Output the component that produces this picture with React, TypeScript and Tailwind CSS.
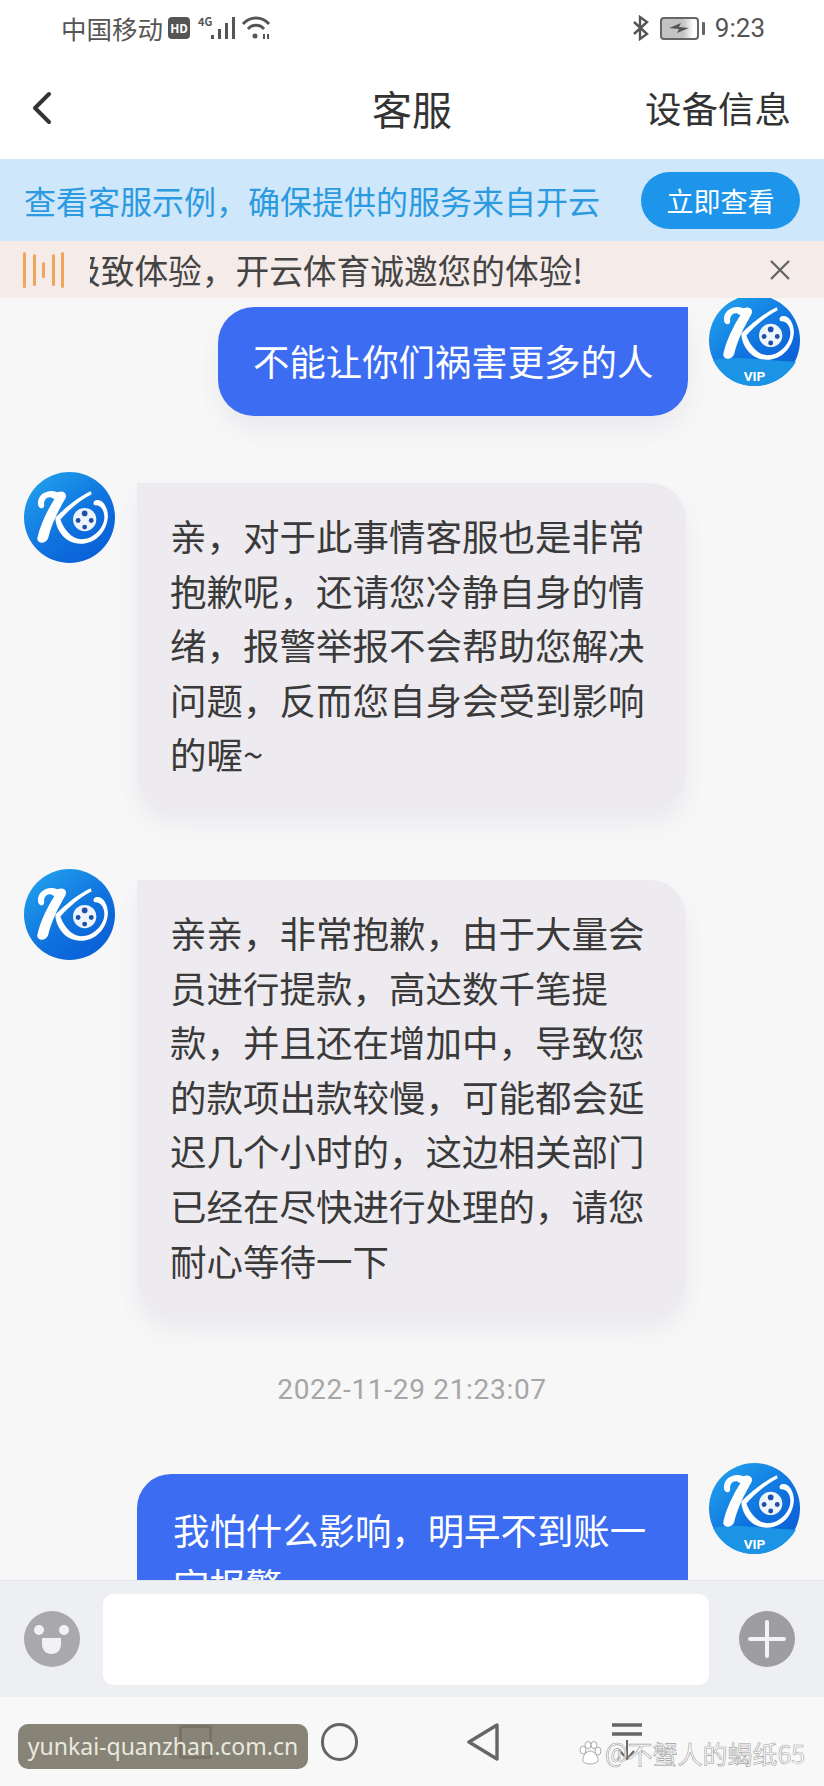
import React from 'react';

const Logo: React.FC<{ vip?: boolean; id: string }> = ({ vip, id }) => (
  <svg viewBox="0 0 90 90" className="h-[91px] w-[91px] shrink-0">
    <defs>
      <linearGradient id={id} x1="0.15" y1="0.1" x2="0.85" y2="0.95">
        <stop offset="0" stopColor="#1f9cec" />
        <stop offset="0.55" stopColor="#0f72de" />
        <stop offset="1" stopColor="#0a5ed6" />
      </linearGradient>
    </defs>
    <circle cx="45" cy="45" r="45" fill={`url(#${id})`} />
    {vip && <path d="M4 64 C22 60 50 64 86 66 C78 80 62 90 45 90 C26 90 11 79 4 64 Z" fill="#1b94e6" />}
    <g transform={vip ? 'translate(1 -7)' : undefined}>
      {/* script K: stem with flourish, arm, leg sweeping round the ball */}
      <path d="M33 20 C39 18 43 21 41 26 C34 38 27 52 24 65 C22 71 14 72 13 66 C16 52 23 38 30 27 C24 22 19 27 20 33 C20 37 15 37 14 33 C12 23 23 16 33 20 Z" fill="#fff" />
      <path d="M66 19 C55 24 42 34 31 45 C31 56 40 71 56 71 C71 71 82 59 83 44 C83 34 77 26 71 28 C68 29 68 33 71 33 C76 33 79.5 38 79.5 45 C79 56 68 66.5 57 66.5 C47 66.5 39 56 36 47 C44 38 55 28 67 22 Z" fill="#fff" />
      <circle cx="60" cy="47" r="11.5" fill="#eef4fb" />
      <circle cx="60" cy="41" r="2.8" fill="#1d4fa8" />
      <circle cx="53.5" cy="48" r="2.4" fill="#1d4fa8" />
      <circle cx="66.5" cy="48" r="2.4" fill="#1d4fa8" />
      <circle cx="60" cy="54.5" r="2.4" fill="#1d4fa8" />
    </g>
    {vip && (
      <text x="45" y="85" textAnchor="middle" fill="#fff" fontSize="13.5" fontWeight="700" fontFamily="Roboto, sans-serif">
        VIP
      </text>
    )}
  </svg>
);

const incoming = [
  ['亲，对于此事情客服也是非常', '抱歉呢，还请您冷静自身的情', '绪，报警举报不会帮助您解决', '问题，反而您自身会受到影响', '的喔~'],
  ['亲亲，非常抱歉，由于大量会', '员进行提款，高达数千笔提', '款，并且还在增加中，导致您', '的款项出款较慢，可能都会延', '迟几个小时的，这边相关部门', '已经在尽快进行处理的，请您', '耐心等待一下'],
];

const IncomingRow: React.FC<{ lines: string[]; id: string; className: string }> = ({ lines, id, className }) => (
  <div className={`flex items-start gap-[22px] pl-[24px] ${className}`}>
    <Logo id={id} />
    <div className="mt-[11px] w-[549px] rounded-[36px] rounded-tl-none bg-[#eeebf0] pb-[28px] pl-[33px] pt-[26px] text-[36.5px] leading-[54.6px] whitespace-nowrap text-[#3a3a3a] shadow-[0_14px_22px_rgba(90,90,120,0.07)]">
      {lines.map((l) => (
        <div key={l}>{l}</div>
      ))}
    </div>
  </div>
);

export default function App() {
  return (
    <div className="relative flex h-[1786px] w-[824px] flex-col overflow-hidden bg-[#f7f7f8] [font-family:'Noto_Sans_CJK_SC','Noto_Sans',sans-serif]">
      {/* status bar */}
      <div className="flex h-[60px] shrink-0 items-center bg-white pb-[4px] pl-[61px] pr-[59px] text-[#555]">
        <span className="text-[25.5px] leading-none">中国移动</span>
        <span className="ml-[5px] flex h-[22px] w-[22px] items-center justify-center rounded-[4px] bg-[#555] text-[12px] font-bold leading-none text-white">HD</span>
        <span className="mb-[13px] ml-[8px] text-[11px] font-bold leading-none">4G</span>
        <svg viewBox="0 0 26 24" className="ml-[-2px] h-[24px] w-[26px]" fill="#555">
          <rect x="1" y="19" width="3" height="4" />
          <rect x="8" y="13" width="3" height="10" />
          <rect x="15" y="7" width="3" height="16" />
          <rect x="22" y="1" width="3" height="22" />
        </svg>
        <svg viewBox="0 0 30 24" className="ml-[5px] h-[24px] w-[30px]" fill="none" stroke="#555" strokeWidth="3">
          <path d="M2 8 C9 0 21 0 28 8" />
          <path d="M7 13 C11 8 19 8 23 13" />
          <circle cx="14" cy="20" r="2.5" fill="#555" stroke="none" />
          <path d="M23 18 v5 M27 18 v5" strokeWidth="2" />
        </svg>
        <div className="ml-auto flex items-center">
          <svg viewBox="0 0 18 26" className="h-[26px] w-[18px]" fill="none" stroke="#555" strokeWidth="2.4">
            <path d="M2 7 L15 19 L8 24 V2 L15 7 L2 19" />
          </svg>
          <div className="ml-[10px] flex h-[23px] w-[39px] items-center justify-center rounded-[4px] border-2 border-[#666] bg-[linear-gradient(90deg,#c4c4c4_60%,#fff_90%)]">
            <svg viewBox="0 0 24 12" className="h-[12px] w-[24px]" fill="#555">
              <path d="M2 6 L14 1 L12 5 L22 6 L10 11 L12 7 Z" />
            </svg>
          </div>
          <span className="ml-[3px] h-[13px] w-[3px] rounded-[1px] bg-[#666]" />
          <span className="ml-[10px] text-[26px] leading-none [font-family:Roboto,sans-serif]">9:23</span>
        </div>
      </div>

      {/* header */}
      <div className="grid h-[99px] shrink-0 grid-cols-3 items-center bg-white pb-[3px] text-[#333]">
        <div className="pl-[31px]">
          <svg viewBox="0 0 22 34" className="h-[34px] w-[22px]" fill="none" stroke="#333" strokeWidth="4" strokeLinecap="round" strokeLinejoin="round">
            <path d="M18 3 L4 17 L18 31" />
          </svg>
        </div>
        <div className="text-center text-[40px] leading-none">客服</div>
        <div className="pr-[33px] text-right text-[36.5px] leading-none">设备信息</div>
      </div>

      {/* banner */}
      <div className="flex h-[82px] shrink-0 items-center justify-between bg-[#cfe7fa] pl-[24px] pr-[24px]">
        <span className="text-[32px] leading-none text-[#2b9ae0]">查看客服示例，确保提供的服务来自开云</span>
        <span className="flex h-[57px] w-[159px] items-center justify-center rounded-full bg-[#1c95ea] text-[27px] leading-none text-white">立即查看</span>
      </div>

      {/* notice */}
      <div className="flex h-[57px] shrink-0 items-center bg-[#f5ebe8] pl-[23px] pr-[34px]">
        <div className="flex w-[67px] shrink-0 items-center gap-[6.5px]">
          <span className="h-[36px] w-[3px] rounded-full bg-[#f0a55a]" />
          <span className="h-[32px] w-[3px] rounded-full bg-[#f0a55a]" />
          <span className="h-[16px] w-[3px] rounded-full bg-[#f0a55a]" />
          <span className="h-[32px] w-[3px] rounded-full bg-[#f0a55a]" />
          <span className="h-[36px] w-[3px] rounded-full bg-[#f0a55a]" />
        </div>
        <div className="w-[540px] overflow-hidden">
          <div className="ml-[-23px] whitespace-nowrap text-[33.7px] leading-[57px] text-[#444]">极致体验，开云体育诚邀您的体验!</div>
        </div>
        <svg viewBox="0 0 20 20" className="ml-auto h-[20px] w-[20px]" fill="none" stroke="#666" strokeWidth="2.4">
          <path d="M1 1 L19 19 M19 1 L1 19" />
        </svg>
      </div>

      {/* chat */}
      <div className="min-h-0 flex-1 overflow-hidden">
        <div className="mt-[-3px] flex items-start justify-end gap-[21px] pr-[24px]">
          <div className="mt-[12px] flex h-[109px] w-[470px] items-center rounded-[36px] rounded-tr-none bg-[#3b6cf2] pb-[2px] pl-[35px] text-[36.4px] leading-none text-white shadow-[0_14px_22px_rgba(90,90,120,0.07)]">
            不能让你们祸害更多的人
          </div>
          <Logo vip id="logo-a" />
        </div>

        <IncomingRow lines={incoming[0]} id="logo-b" className="mt-[56px]" />
        <IncomingRow lines={incoming[1]} id="logo-c" className="mt-[59px]" />

        <div className="mt-[54px] h-[40px] text-center text-[28px] leading-[40px] tracking-[0.7px] text-[#a6a6a6] [font-family:Roboto,sans-serif]">2022-11-29 21:23:07</div>

        <div className="mt-[53px] flex items-start justify-end gap-[21px] pr-[24px]">
          <div className="mt-[11px] w-[551px] rounded-[34px] rounded-tr-none bg-[#3b6cf2] pb-[24px] pl-[36px] pt-[28px] text-[36.4px] leading-[54.6px] text-white">
            <div className="whitespace-nowrap">我怕什么影响，明早不到账一</div>
            <div>定报警</div>
          </div>
          <Logo vip id="logo-d" />
        </div>
      </div>

      {/* input bar */}
      <div className="flex h-[117px] shrink-0 items-center border-t border-[#e6e6e8] bg-[#eeeff2] pl-[24px]">
        <svg viewBox="0 0 56 56" className="h-[56px] w-[56px] shrink-0">
          <circle cx="28" cy="28" r="28" fill="#a9a9ad" />
          <circle cx="15" cy="19" r="5" fill="#f2f1f5" />
          <circle cx="40" cy="19" r="5" fill="#f2f1f5" />
          <path d="M18 27 H37 V33 C37 39 33 43 27.5 43 C22 43 18 39 18 33 Z" fill="#f2f1f5" />
        </svg>
        <div className="ml-[23px] h-[91px] w-[606px] rounded-[10px] bg-white" />
        <svg viewBox="0 0 58 56" className="ml-[29px] h-[56px] w-[58px] shrink-0">
          <circle cx="29" cy="28" r="28" fill="#9d9da2" />
          <path d="M12 28 H46 M29 11 V45" stroke="#f4f4f6" strokeWidth="4" strokeLinecap="round" />
        </svg>
      </div>

      {/* nav bar */}
      <div className="flex h-[89px] shrink-0 items-start bg-[#f8f8f8] pl-[123px] pt-[26px]">
        <div className="flex h-[38px] w-[144px] items-center justify-center">
          <div className="h-[34px] w-[33px] rounded-[3px] border-[3px] border-[#555]" />
        </div>
        <div className="flex h-[38px] w-[144px] items-center justify-center">
          <div className="h-[38px] w-[37px] rounded-full border-[3px] border-[#666]" />
        </div>
        <div className="flex h-[38px] w-[144px] items-center justify-center">
          <svg viewBox="0 0 32 38" className="h-[38px] w-[32px]" fill="none" stroke="#666" strokeWidth="3.4" strokeLinejoin="round">
            <path d="M30 2 V36 L2 19 Z" />
          </svg>
        </div>
        <div className="flex h-[38px] w-[144px] items-start justify-center">
          <svg viewBox="0 0 32 38" className="h-[38px] w-[32px]" fill="none" stroke="#666" strokeWidth="3.4">
            <path d="M1 2 H31 M1 11 H31" />
            <path d="M16 17 V36 M9 28 L16 36 L23 28" strokeWidth="2" />
          </svg>
        </div>
      </div>

      {/* overlaid site tag */}
      <div className="absolute left-[18px] top-[1724px] flex h-[45px] w-[290px] items-center justify-center rounded-[10px] bg-[#7a7668]/90 text-[23px] leading-none text-[#e9eadf] [font-family:'Noto_Sans',sans-serif]">
        yunkai-quanzhan.com.cn
      </div>

      {/* overlaid watermark */}
      <div className="absolute left-[578px] top-[1738px] flex h-[30px] items-center whitespace-nowrap text-[25px] leading-none text-white [-webkit-text-stroke:0.6px_#a0a0a0]">
        <svg viewBox="0 0 24 24" className="h-[24px] w-[24px]" fill="#fff" stroke="#aaa" strokeWidth="1">
          <ellipse cx="5" cy="9" rx="3" ry="4" />
          <ellipse cx="10" cy="4" rx="3" ry="3.5" />
          <ellipse cx="16" cy="4" rx="3" ry="3.5" />
          <ellipse cx="20" cy="10" rx="3" ry="4" />
          <path d="M12 10 C8 10 4 16 5 20 C6 24 18 24 20 20 C21 16 16 10 12 10 Z" />
        </svg>
        <span className="ml-[3px] [font-family:Roboto,sans-serif]">@</span>
        <span>不蟹人的蝎纸65</span>
      </div>
    </div>
  );
}
